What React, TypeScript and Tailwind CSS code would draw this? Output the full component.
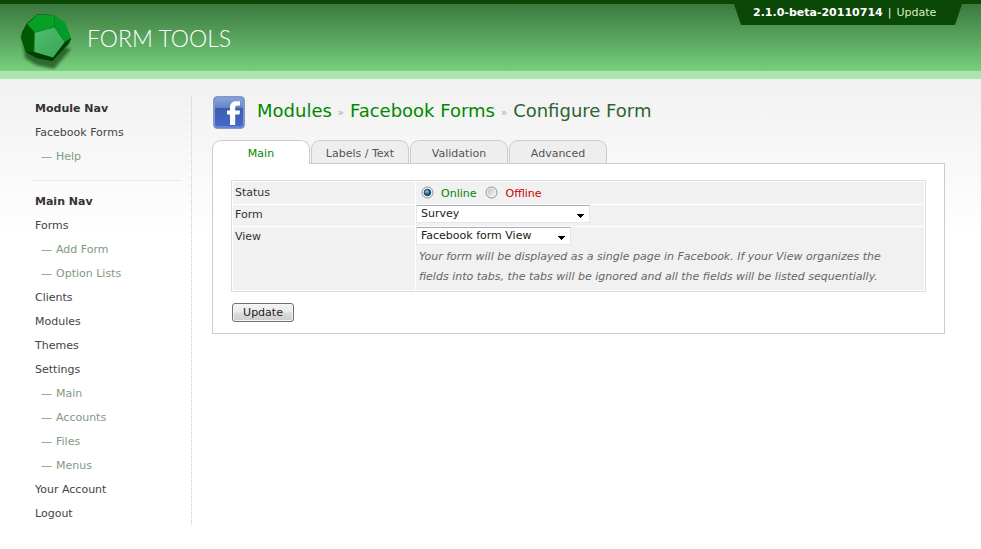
import React from "react";

type NavItem = { label: string; sub?: boolean; spacing?: string };

const mainNav: NavItem[] = [
  { label: "Forms" },
  { label: "Add Form", sub: true },
  { label: "Option Lists", sub: true },
  { label: "Clients" },
  { label: "Modules" },
  { label: "Themes" },
  { label: "Settings" },
  { label: "Main", sub: true },
  { label: "Accounts", sub: true },
  { label: "Files", sub: true },
  { label: "Menus", sub: true },
  { label: "Your Account" },
  { label: "Logout" },
];

function NavRow({ label, sub }: NavItem) {
  return sub ? (
    <a className="flex h-6 items-center pl-[6px] text-[#809a80]">
      <span className="mr-[4px] w-[11px]">—</span>
      {label}
    </a>
  ) : (
    <a className="flex h-6 items-center text-[#444444]">{label}</a>
  );
}

function Logo() {
  return (
    <svg width="60" height="60" viewBox="0 0 60 60" className="block">
      <defs>
        <filter id="shade" x="-20%" y="-20%" width="140%" height="150%">
          <feGaussianBlur stdDeviation="1.8" />
        </filter>
        <linearGradient id="face" x1="0" y1="0" x2="1" y2="1">
          <stop offset="0" stopColor="#4dbd6c" />
          <stop offset="1" stopColor="#3aa557" />
        </linearGradient>
      </defs>
      <path d="M6 28 9 51 20 58 38 62 55 42Z" transform="translate(0 -3)" fill="#174d1b" opacity="0.75" filter="url(#shade)" />
      <path d="M22 4 36 5 49 14 55 29 53 34 36 51 20 48 10 42 5 28 6 22 11 13Z" transform="translate(0 0)" fill="#024f08" />
      <path d="M11 14 22 4.500 39 5.500 38.500 17 18.500 22.500Z" fill="#06a024" />
      <path d="M39 5.500 49 12.500 55 28 49 32 38.500 17Z" fill="#039a2c" />
      <path d="M11 14 18.500 22.500 18 42.500 10 42 5.500 27.500Z" fill="#005a02" />
      <path d="M18.500 22.500 38.500 17 49 32 37 47.500 18 42Z" fill="url(#face)" />
      <path d="M49 32 55.500 28.500 36.500 51 22 48 10 42 18 42 37 48Z" fill="#003c02" />
      <path d="M38.500 17V5.500M38.500 17 18.500 22.500 18 42M38.500 17 49 32" fill="none" stroke="#087c20" strokeWidth="0.6" />
    </svg>
  );
}

function FacebookIcon() {
  return (
    <svg width="33" height="34" viewBox="0 0 33 34" className="block">
      <defs>
        <linearGradient id="fb" x1="0" y1="0" x2="0" y2="1">
          <stop offset="0" stopColor="#8aa5dc" />
          <stop offset="0.34" stopColor="#6684c4" />
          <stop offset="0.36" stopColor="#3a5dab" />
          <stop offset="1" stopColor="#4469cd" />
        </linearGradient>
      </defs>
      <rect x="0.500" y="0.500" width="31" height="32" rx="4" fill="#5d77b0" stroke="#8797b8" />
      <rect x="1.500" y="1.500" width="29" height="29.500" rx="3" fill="url(#fb)" stroke="#7c9bdd" />
      <path d="M17 29V18.500H14V14.500H17V11.500C17 7.500 19.300 5.200 23 5.200H27V9.600H24.500C22.800 9.600 22.200 10.400 22.200 12V14.500H27L26.500 18.500H22.200V29Z" fill="#fff" />
    </svg>
  );
}

function Radio({ checked }: { checked?: boolean }) {
  return (
    <svg width="13" height="13" viewBox="0 0 13 13" className="block">
      <defs>
        <radialGradient id="dot" cx="0.4" cy="0.35" r="0.65">
          <stop offset="0" stopColor="#8be4ff" />
          <stop offset="0.45" stopColor="#1d82b8" />
          <stop offset="1" stopColor="#0a304f" />
        </radialGradient>
        <linearGradient id="well" x1="0" y1="0" x2="1" y2="1">
          <stop offset="0" stopColor="#bfc3c7" />
          <stop offset="1" stopColor="#f6f6f6" />
        </linearGradient>
      </defs>
      <circle cx="6.500" cy="6.500" r="5.500" fill="#f5f5f5" stroke="#8e8f8f" />
      <circle cx="6.500" cy="6.500" r="4" fill="url(#well)" />
      {checked && <circle cx="6.500" cy="6.500" r="3.300" fill="url(#dot)" stroke="#173b59" strokeWidth="0.7" />}
    </svg>
  );
}

function Select({ label, width }: { label: string; width: string }) {
  return (
    <div className={`flex h-[18px] items-center justify-between border border-[#e3e6ea] border-t-[#abadb3] bg-white pr-[4px] pl-[4px] text-black ${width}`}>
      <span className="text-[#222222]">{label}</span>
      <svg width="8" height="4" viewBox="0 0 8 4" className="mt-[4px]" shapeRendering="crispEdges">
        <path d="M0 0H7V1H6V2H5V3H4V4H3V3H2V2H1V1H0Z" fill="#000" />
      </svg>
    </div>
  );
}

export default function App() {
  return (
    <div className="h-[549px] w-[981px] overflow-hidden bg-white font-['DejaVu_Sans',Verdana,sans-serif] text-[11px] leading-[20px] text-[#333333]">
      <header className="flex h-[79px] justify-between border-t-4 border-b-8 border-t-[#0b4705] border-b-[#ade5b0] bg-linear-to-b from-[#3b793f] to-[#77d07d]">
        <div className="flex pl-4">
          <div className="mt-[6px]">
            <Logo />
          </div>
          <span className="mt-[19px] ml-[11px] font-['Lato',sans-serif] text-[23px] leading-[30px] font-light whitespace-nowrap text-white">
            FORM TOOLS
          </span>
        </div>
        <div className="mr-[19px] flex h-[21px] w-[228px] items-start bg-[#0b4705] pl-[19px] leading-[18px] whitespace-nowrap text-[#f0f8e8] [clip-path:polygon(0_0,100%_0,221px_100%,7px_100%)]">
          <b className="text-white">2.1.0-beta-20110714</b>
          <span className="mx-[5px]">|</span>
          <span className="text-[#d9f0c0]">Update</span>
        </div>
      </header>

      <div className="flex h-[470px] bg-[linear-gradient(to_bottom,#f1f1f1_0px,#ffffff_160px)] pt-[17px]">
        <aside className="flex h-[429px] w-[192px] shrink-0 flex-col pl-[31px]">
          <nav className="flex flex-col pt-px pl-[4px]">
            <b className="flex h-6 items-center">Module Nav</b>
            <NavRow label="Facebook Forms" />
            <NavRow label="Help" sub />
          </nav>
          <div className="mt-[11px] w-[150px] border-t border-[#ebebeb]" />
          <nav className="flex flex-col pt-[9px] pl-[4px]">
            <b className="flex h-6 items-center">Main Nav</b>
            {mainNav.map((item) => (
              <NavRow key={item.label} {...item} />
            ))}
          </nav>
        </aside>
        <div className="-ml-px h-[429px] w-px bg-[repeating-linear-gradient(to_bottom,#cccccc_0px,#cccccc_1px,transparent_1px,transparent_2px)]" />

        <main className="ml-[20px] w-[733px]">
          <div className="flex h-[44px] pl-px">
            <FacebookIcon />
            <h1 className="ml-[11px] flex h-[30px] items-center text-[18px] whitespace-nowrap text-[#008800]">
              <span>Modules</span>
              <span className="mx-[6px] pt-[4px] text-[10px] text-[#aaaaaa]">»</span>
              <span>Facebook Forms</span>
              <span className="mx-[6px] pt-[4px] text-[10px] text-[#aaaaaa]">»</span>
              <span className="text-[#2f632f]">Configure Form</span>
            </h1>
          </div>
          <div className="relative z-10 flex gap-px">
            <div className="-mb-px h-[24px] w-[98px] rounded-t-[9px] border border-b-0 border-[#cccccc] bg-white text-center leading-[26px] text-[#008800]">
              Main
            </div>
            {["Labels / Text", "Validation", "Advanced"].map((tab) => (
              <div key={tab} className="h-[23px] w-[98px] rounded-t-[9px] border border-b-0 border-[#cccccc] bg-[#eeeeee] text-center leading-[26px] text-[#555555]">
                {tab}
              </div>
            ))}
          </div>
          <section className="h-[171px] border border-[#cccccc] bg-white pt-[16px] pl-[18px]">
            <div className="grid h-[112px] w-[695px] grid-cols-[182px_508px] grid-rows-[22px_21px_63px] gap-px border border-[#dddddd] p-px *:bg-[#f1f1f1]">
              <div className="pt-px pl-[2px]">Status</div>
              <div className="flex pl-[5px]">
                <div className="pt-[4px]"><Radio checked /></div>
                <span className="ml-[7px] pt-[2px] text-[#008800]">Online</span>
                <div className="ml-[9px] pt-[4px]"><Radio /></div>
                <span className="ml-[7px] pt-[2px] text-[#cc0000]">Offline</span>
              </div>
              <div className="pl-[2px]">Form</div>
              <div><Select label="Survey" width="w-[174px]" /></div>
              <div className="pl-[2px]">View</div>
              <div>
                <Select label="Facebook form View" width="w-[155px]" />
                <p className="pt-[2px] pl-[3px] whitespace-nowrap text-[#666666] italic">
                  Your form will be displayed as a single page in Facebook. If your View organizes the
                  <br />
                  fields into tabs, the tabs will be ignored and all the fields will be listed sequentially.
                </p>
              </div>
            </div>
            <button className="mt-[11px] ml-px block h-[19px] w-[62px] rounded-[3px] border border-[#707070] bg-[linear-gradient(to_bottom,#f3f3f3_0%,#ebebeb_48%,#dcdcdc_52%,#cdcdcd_100%)] text-center leading-[18px] text-[#222222] shadow-[inset_0_0_0_1px_#f6f6f6]">
              Update
            </button>
          </section>
        </main>
      </div>
    </div>
  );
}
